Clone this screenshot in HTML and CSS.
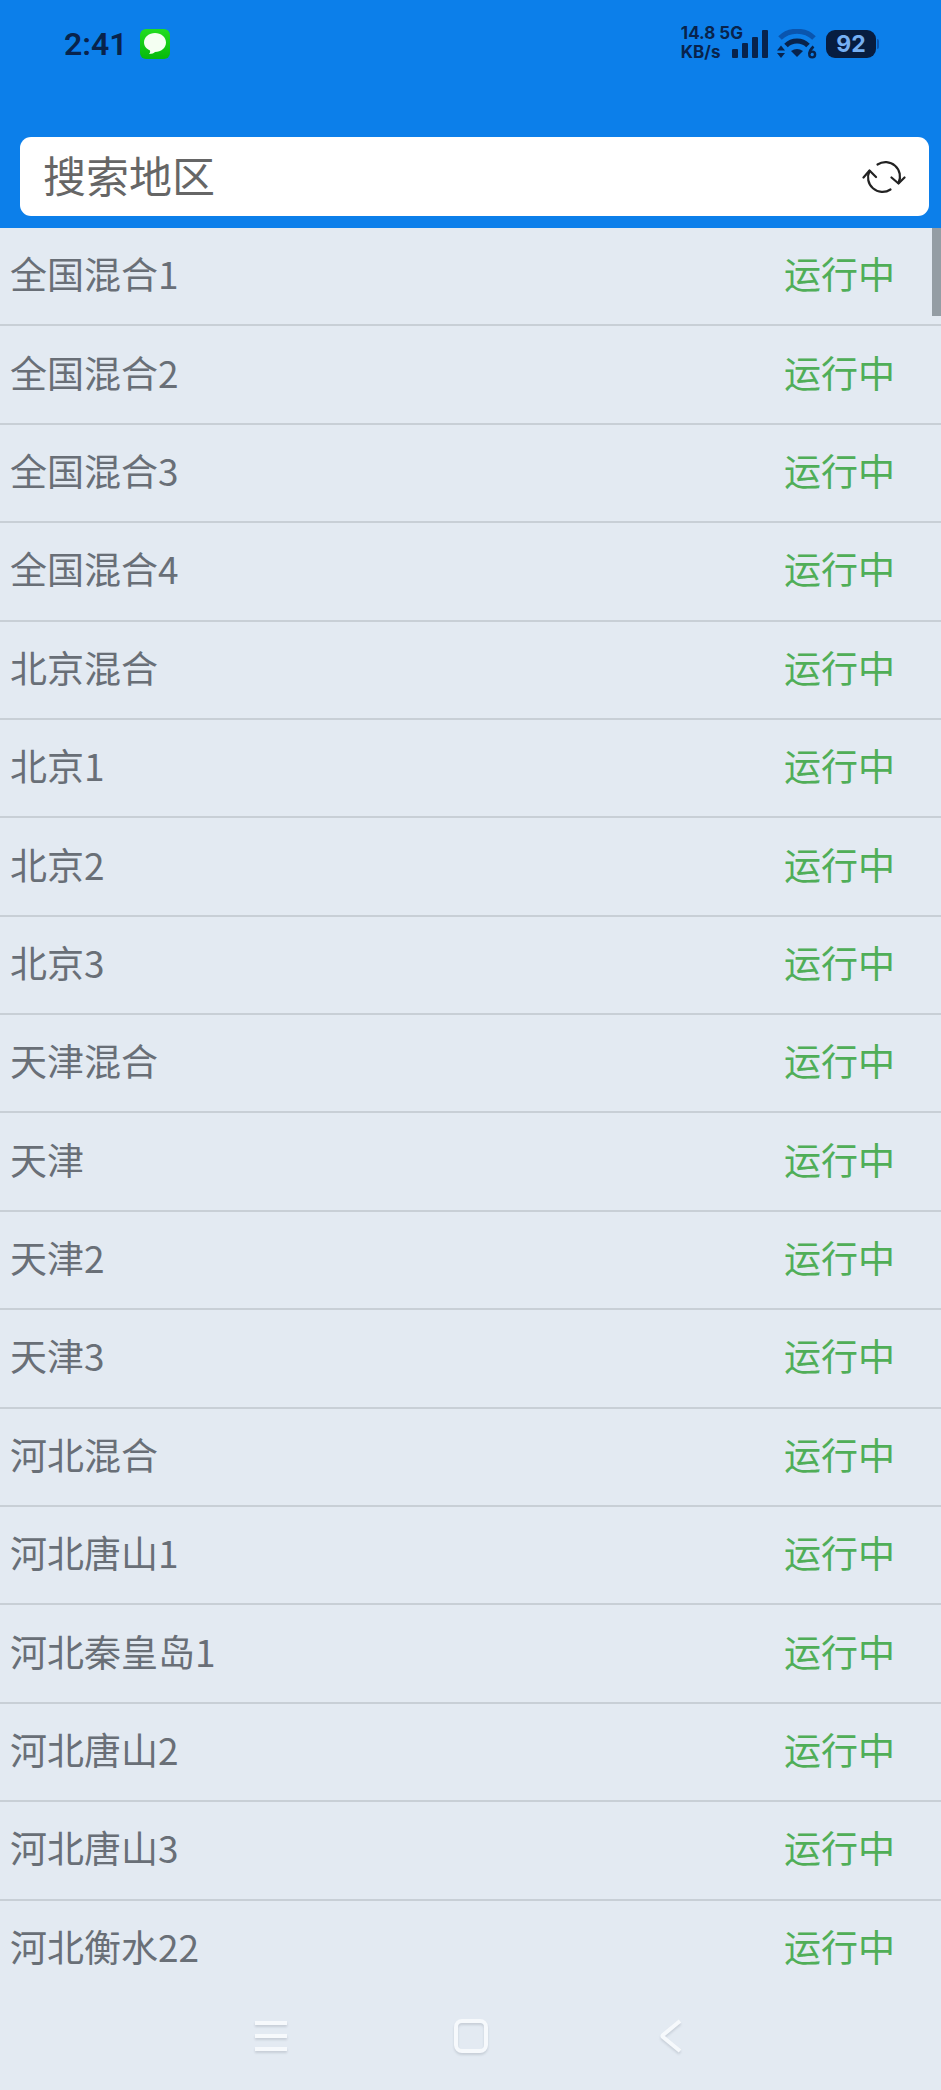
FILE: index.html
```html
<!DOCTYPE html>
<html lang="zh-CN">
<head>
    <meta charset="UTF-8" />
    <meta name="viewport" content="width=device-width, initial-scale=1.0"/>
    <title>搜索地区</title>
    <link rel="stylesheet" href="styles.css">
</head>

<body>

<header class="header">
    <div class="status-bar">
        <div class="status-left">
            <span class="time">2:41</span>
            <svg class="msg-icon" width="30" height="30" viewBox="0 0 30 30">
                <defs>
                    <linearGradient id="msg" x1="0" y1="0" x2="0" y2="1">
                        <stop offset="0" stop-color="#22dd20"/>
                        <stop offset="1" stop-color="#06b90c"/>
                    </linearGradient>
                </defs>
                <rect width="30" height="30" rx="6" fill="url(#msg)"/>
                <path d="M15 4C9 4 4 8 4 13.500C4 17 6.500 20 10 21.500C10.300 23 10 24 9 25C12 25 14 24 15 23C21 23 26 19 26 13.500C26 8 21 4 15 4Z" fill="#f4fff2"/>
            </svg>
        </div>

        <div class="status-right">
            <div class="net-speed">14.8 5G<br>KB/s</div>
            <svg class="signal" width="36" height="28" viewBox="0 0 36 28">
                <rect x="0" y="19" width="6" height="9" rx="1"/>
                <rect x="10" y="13" width="6" height="15" rx="1"/>
                <rect x="20" y="7" width="6" height="21" rx="1"/>
                <rect x="30" y="0" width="6" height="28" rx="1"/>
            </svg>
            <svg class="wifi" width="40" height="30" viewBox="0 0 40 30">
                <path d="M3 9C12 0 28 0 37 9" fill="none" stroke="#0a55ae" stroke-width="5"/>
                <path d="M9 16.500C15 10.500 25 10.500 31 16.500" fill="none" stroke="#08234c" stroke-width="5"/>
                <path d="M14 22Q20 18 26 22L20 28Z"/>
                <path d="M0 21.500L4 16.500L8 21.500ZM0 24L4 29L8 24Z"/>
                <path d="M36.500 17.500Q32.500 21 32.500 25" fill="none" stroke="#08234c" stroke-width="2.600"/>
                <circle cx="35.200" cy="25.500" r="2.900" fill="none" stroke="#08234c" stroke-width="2.400"/>
            </svg>
            <div class="battery">92</div>
        </div>
    </div>

    <form class="search">
        <input class="search-input" type="text" placeholder="搜索地区" aria-label="搜索地区">
        <button class="refresh-btn" type="button" aria-label="刷新">
            <svg width="44" height="34" viewBox="0 0 44 34" fill="none" stroke="#222" stroke-width="2.200" stroke-linecap="round" stroke-linejoin="round">
                <path d="M15.500 4.500A14.500 14.500 0 0 1 36.500 23"/>
                <path d="M29.500 17.500L36.500 23.500L42.500 17.500"/>
                <path d="M28.500 29.500A14.500 14.500 0 0 1 7.500 11"/>
                <path d="M1.500 17.500L7.500 10.500L14 17"/>
            </svg>
        </button>
    </form>
</header>

<main class="region-panel">
    <ul class="region-list">
        <li class="region"><span>全国混合1</span><span class="state">运行中</span></li>
        <li class="region"><span>全国混合2</span><span class="state">运行中</span></li>
        <li class="region"><span>全国混合3</span><span class="state">运行中</span></li>
        <li class="region"><span>全国混合4</span><span class="state">运行中</span></li>
        <li class="region"><span>北京混合</span><span class="state">运行中</span></li>
        <li class="region"><span>北京1</span><span class="state">运行中</span></li>
        <li class="region"><span>北京2</span><span class="state">运行中</span></li>
        <li class="region"><span>北京3</span><span class="state">运行中</span></li>
        <li class="region"><span>天津混合</span><span class="state">运行中</span></li>
        <li class="region"><span>天津</span><span class="state">运行中</span></li>
        <li class="region"><span>天津2</span><span class="state">运行中</span></li>
        <li class="region"><span>天津3</span><span class="state">运行中</span></li>
        <li class="region"><span>河北混合</span><span class="state">运行中</span></li>
        <li class="region"><span>河北唐山1</span><span class="state">运行中</span></li>
        <li class="region"><span>河北秦皇岛1</span><span class="state">运行中</span></li>
        <li class="region"><span>河北唐山2</span><span class="state">运行中</span></li>
        <li class="region"><span>河北唐山3</span><span class="state">运行中</span></li>
        <li class="region"><span>河北衡水22</span><span class="state">运行中</span></li>
    </ul>
    <div class="scroll-thumb"></div>
</main>

<nav class="nav-bar">
    <button class="nav-btn" type="button" aria-label="菜单">
        <svg width="34" height="34" viewBox="0 0 34 34">
            <path d="M1 4H33M1 17H33M1 30H33"/>
        </svg>
    </button>
    <button class="nav-btn" type="button" aria-label="主页">
        <svg width="34" height="34" viewBox="0 0 34 34">
            <rect x="2" y="2" width="30" height="30" rx="6"/>
        </svg>
    </button>
    <button class="nav-btn" type="button" aria-label="返回">
        <svg width="34" height="34" viewBox="0 0 34 34">
            <path d="M26 2L9 16Q8 17 9 18L26 32"/>
        </svg>
    </button>
</nav>

</body>
</html>
```
FILE: styles.css
```css
:root {
    --blue: #0c7fea;
    --ink: #08234c;
    --bg: #e3eaf2;
    --line: #c8cfd6;
    --text: #696f77;
    --green: #50ae58;
}

* {
    box-sizing: border-box;
    margin: 0;
    padding: 0;
}

body {
    display: flex;
    flex-direction: column;
    min-height: 100vh;
    background: var(--bg);
    font-family: "Noto Sans CJK SC", "Noto Sans", sans-serif;
    color: var(--text);
}

button {
    border: none;
    background: none;
    cursor: pointer;
}

svg { display: block; }

/* HEADER */
.header {
    background: var(--blue);
    padding-bottom: 12px;
}

.status-bar {
    display: flex;
    justify-content: space-between;
    align-items: center;
    height: 87px;
    padding: 0 65px 0 64px;
    color: var(--ink);
}

.status-left,
.status-right {
    display: flex;
    align-items: center;
}

.status-left { gap: 12px; }
.status-right { gap: 9px; }

.time {
    font-family: Roboto, sans-serif;
    font-size: 32px;
    font-weight: 600;
}

.net-speed {
    padding-bottom: 2px;
    font-family: Inter, sans-serif;
    font-size: 17px;
    line-height: 19px;
    font-weight: 700;
}

/* the bars tuck in under the 5G label */
.signal {
    margin-left: -20px;
    fill: var(--ink);
}

.wifi { fill: var(--ink); }

.battery {
    position: relative;
    width: 50px;
    height: 28px;
    border-radius: 9px;
    background: #071d40;
    color: #75aff2;
    font-family: Inter, sans-serif;
    font-size: 23px;
    line-height: 28px;
    font-weight: 700;
    text-align: center;
}

.battery::after {
    content: "";
    position: absolute;
    left: 51px;
    top: 9px;
    width: 2px;
    height: 10px;
    border-radius: 0 2px 2px 0;
    background: #0a55ae;
}

/* SEARCH */
.search {
    display: flex;
    align-items: center;
    height: 79px;
    margin: 50px 12px 0 20px;
    padding: 0 23px;
    border-radius: 11px;
    background: #fff;
}

.search-input {
    flex: 1;
    min-width: 0;
    padding-bottom: 5px;
    border: none;
    outline: none;
    background: none;
    font-family: inherit;
    font-size: 43px;
    line-height: 60px;
    color: #666;
}

.search-input::placeholder {
    color: #666;
    opacity: 1;
}

/* REGION LIST */
.region-panel {
    position: relative;
    display: flex;
    flex: 1;
}

.region-list {
    display: grid;
    grid-auto-rows: 1fr;
    flex: 1;
    list-style: none;
}

.region {
    display: flex;
    justify-content: space-between;
    align-items: center;
    padding: 0 46px 6px 10px;
    border-bottom: 2px solid var(--line);
    font-size: 37px;
    line-height: 48px;
}

.region:last-child { border-bottom-color: transparent; }

.state { color: var(--green); }

.scroll-thumb {
    position: absolute;
    top: 0;
    right: 0;
    width: 9px;
    height: 88px;
    background: #949da4;
}

/* BOTTOM NAV */
.nav-bar {
    display: flex;
    justify-content: center;
    height: 91px;
    padding-bottom: 18px;
}

.nav-btn {
    display: flex;
    justify-content: center;
    align-items: center;
    width: 200px;
}

.nav-btn svg {
    fill: none;
    stroke: #f6f9fc;
    stroke-width: 4;
    filter: drop-shadow(0 2px 1px rgba(90, 100, 115, 0.2));
}
```
